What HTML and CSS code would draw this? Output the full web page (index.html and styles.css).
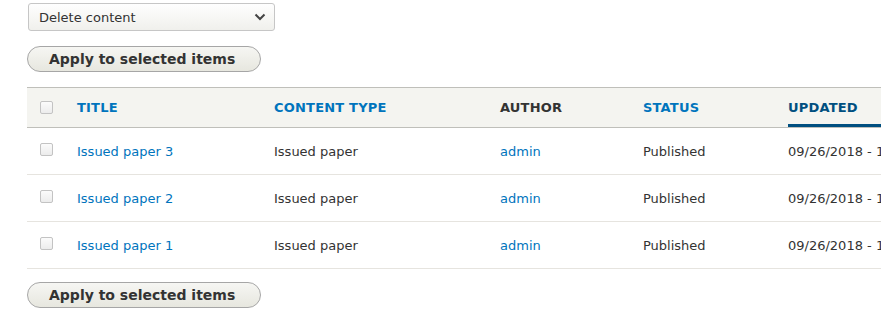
FILE: index.html
```html
<!DOCTYPE html>
<html>
<head>
<meta charset="utf-8">
<link rel="stylesheet" href="styles.css">
</head>
<body>
<div class="page">
  <div class="select">
    <span class="select-label">Delete content</span>
    <svg class="chevron" width="12" height="8" viewBox="0 0 12 8"><path d="M1.5 1.5 L6 6 L10.5 1.5" fill="none" stroke="#444" stroke-width="2"/></svg>
  </div>
  <div class="actions"><button class="btn">Apply to selected items</button></div>
  <table class="grid">
    <colgroup>
      <col class="c-check"><col class="c-title"><col class="c-type"><col class="c-author"><col class="c-status"><col class="c-updated">
    </colgroup>
    <thead>
      <tr>
        <th class="th-check"><span class="cb"></span></th>
        <th><a class="sort">TITLE</a></th>
        <th><a class="sort">CONTENT TYPE</a></th>
        <th><span class="plain">AUTHOR</span></th>
        <th><a class="sort">STATUS</a></th>
        <th><a class="sort active">UPDATED</a></th>
      </tr>
    </thead>
    <tbody>
      <tr>
        <td class="td-check"><span class="cb"></span></td>
        <td><a class="link">Issued paper 3</a></td>
        <td>Issued paper</td>
        <td><a class="link">admin</a></td>
        <td>Published</td>
        <td class="nowrap">09/26/2018 - 15:20</td>
      </tr>
      <tr>
        <td class="td-check"><span class="cb"></span></td>
        <td><a class="link">Issued paper 2</a></td>
        <td>Issued paper</td>
        <td><a class="link">admin</a></td>
        <td>Published</td>
        <td class="nowrap">09/26/2018 - 15:19</td>
      </tr>
      <tr>
        <td class="td-check"><span class="cb"></span></td>
        <td><a class="link">Issued paper 1</a></td>
        <td>Issued paper</td>
        <td><a class="link">admin</a></td>
        <td>Published</td>
        <td class="nowrap">09/26/2018 - 15:18</td>
      </tr>
    </tbody>
  </table>
  <div class="actions bottom"><button class="btn">Apply to selected items</button></div>
</div>
</body>
</html>
```
FILE: styles.css
```css
html, body {
  margin: 0;
  padding: 0;
  background: #fff;
  overflow: hidden;
}
body {
  font-family: "DejaVu Sans", "Liberation Sans", sans-serif;
  color: #333;
  font-size: 13px;
  width: 881px;
  height: 335px;
}
.page {
  padding: 3px 0 0 27px;
  width: 1000px;
}
.select {
  box-sizing: border-box;
  margin-left: 1px;
  width: 247px;
  height: 28px;
  border: 1px solid #c6c6c6;
  border-radius: 3px;
  background: linear-gradient(#fefefe, #f0f0ec);
  display: flex;
  align-items: center;
  justify-content: space-between;
  padding: 0 8px 0 10px;
}
.select-label {
  font-size: 13px;
  color: #333;
}
.chevron {
  display: block;
}
.actions {
  margin-top: 15px;
}
.actions.bottom {
  margin-top: 13px;
}
.btn {
  box-sizing: border-box;
  height: 26px;
  width: 234px;
  padding: 0 21px;
  border: 1px solid #a6a6a6;
  border-radius: 20em;
  background: linear-gradient(#f6f6f3, #e7e7df);
  color: #333;
  font-family: "DejaVu Sans", sans-serif;
  font-weight: bold;
  font-size: 14px;
  text-align: left;
  line-height: 24px;
}
.grid {
  margin-top: 15px;
  border-collapse: collapse;
  table-layout: fixed;
  width: 966px;
}
.c-check { width: 38px; }
.c-title { width: 197px; }
.c-type { width: 226px; }
.c-author { width: 143px; }
.c-status { width: 145px; }
.c-updated { width: 217px; }
.grid thead tr {
  background: #f4f4f0;
  border-top: 1px solid #bfbfba;
  border-bottom: 1px solid #bfbfba;
}
.grid th {
  padding: 0 12px;
  height: 39px;
  text-align: left;
  font-weight: bold;
  font-size: 13px;
  letter-spacing: 0.2px;
  vertical-align: top;
}
.sort, .plain {
  display: block;
  padding: 12px 0 12px;
  line-height: 15px;
  white-space: nowrap;
}
.sort {
  color: #0074bd;
}
.plain {
  color: #333;
}
.sort.active {
  color: #004f80;
  padding-bottom: 9px;
  border-bottom: 3px solid #004f80;
}
.th-check {
  vertical-align: middle !important;
}
.grid tbody tr {
  border-bottom: 1px solid #e6e4df;
}
.grid td {
  height: 46px;
  padding: 0 12px;
  vertical-align: middle;
  white-space: nowrap;
  overflow: hidden;
}
.link {
  color: #0074bd;
}
.td-check .cb {
  margin-top: -4px;
}
.cb {
  display: block;
  box-sizing: border-box;
  width: 13px;
  height: 13px;
  margin-left: 1px;
  border: 1px solid #c3c3c3;
  border-radius: 2px;
  background: linear-gradient(#fbfbfb, #ececec);
}
```
